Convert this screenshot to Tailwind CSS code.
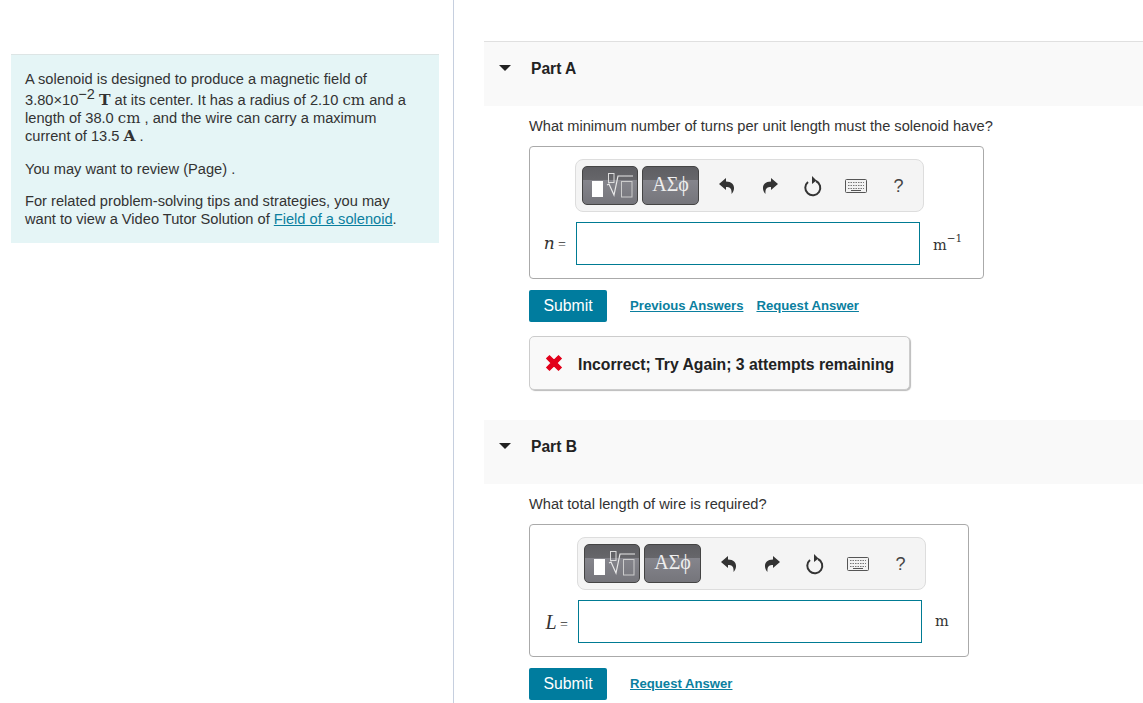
<!DOCTYPE html>
<html lang="en">
<head>
    <meta charset="UTF-8">
    <title>Solenoid problem</title>
    <script src="https://cdn.jsdelivr.net/npm/@tailwindcss/browser@4"></script>
</head>
<body class="bg-white font-['Liberation_Sans',Arial,sans-serif] text-[14.65px] text-[#333] overflow-hidden">
<div class="flex h-[703px] w-[1143px] overflow-hidden">

    <!-- Left column: problem text -->
    <aside class="w-[454px] shrink-0 border-r border-[#c6cfdf] pt-[54px] pl-[11px]">
        <div class="w-[428px] h-[189px] bg-[#e5f5f6] border-t border-[#dde5e5] pl-[14px] pt-[15px] leading-[18px]">
            <p>A solenoid is designed to produce a magnetic field of</p>
            <p class="mt-[3px]">3.80×10<span class="text-[14.5px] leading-none relative -top-[6px] whitespace-nowrap">−2</span> <span class="font-['DejaVu_Serif',serif] text-[15.5px] font-bold">T</span> at its center. It has a radius of 2.10 <span class="font-['DejaVu_Serif',serif] text-[15px]">cm</span> and a</p>
            <p>length of 38.0 <span class="font-['DejaVu_Serif',serif] text-[15px]">cm</span> , and the wire can carry a maximum</p>
            <p>current of 13.5 <span class="font-['DejaVu_Serif',serif] text-[15.5px] font-bold">A</span> .</p>
            <p class="mt-[15px]">You may want to review (Page) .</p>
            <p class="mt-[14px]">For related problem-solving tips and strategies, you may</p>
            <p>want to view a Video Tutor Solution of <a href="#" class="text-[#0b7f9f] underline">Field of a solenoid</a>.</p>
        </div>
    </aside>

    <!-- Right column: parts -->
    <main class="pl-[30px] pt-[41px] grow">

        <!-- Part A -->
        <section class="h-[65px] bg-[#f9f9f9] border-t border-[#e0e0e0] flex items-start pt-[17px]">
            <svg class="ml-[15px] mt-[6px]" width="12" height="6" viewBox="0 0 12 6"><path d="M0 0H12L6 6Z" fill="#222"/></svg>
            <h2 class="ml-[20px] font-bold text-[#222] text-[15.6px] leading-[20px]">Part A</h2>
        </section>
        <div class="pl-[45px]">
            <p class="mt-[11px] leading-[18px]">What minimum number of turns per unit length must the solenoid have?</p>
            <div class="mt-[11px] w-[455px] h-[133px] border border-[#aaa] rounded-[4px] pt-[12px]">
                <div class="ml-[45px] w-[349px] h-[53px] bg-[#f4f4f4] border border-[#ddd] rounded-[8px] flex items-center pl-[6px]">
                    <span class="w-[56px] h-[39px] rounded-[5px] border border-[#444] bg-[linear-gradient(#5e5e62_0,#66666a_35%,#85858c_36%,#75757b_100%)] shrink-0">
                        <svg width="54" height="37" viewBox="0 0 54 37" fill="none">
                            <rect x="9" y="14" width="11" height="16" fill="#fff"/>
                            <rect x="25.5" y="6.5" width="5.5" height="9" stroke="#ddd"/>
                            <path d="M24 18L26 17L31 28L35 9H50" stroke="#e8e8e8" stroke-width="1.2"/>
                            <rect x="38.5" y="14.5" width="10.5" height="15.5" stroke="#ccc"/>
                        </svg>
                    </span>
                    <span class="ml-[4px] w-[57px] h-[39px] pb-[3px] rounded-[5px] border border-[#444] bg-[linear-gradient(#5e5e62_0,#66666a_35%,#85858c_36%,#75757b_100%)] shrink-0 flex items-center justify-center font-['Liberation_Serif',serif] text-[20px] text-[#eee]">ΑΣϕ</span>
                    <span class="ml-[6px] w-[43px] flex justify-center">
                        <svg width="16" height="16" viewBox="0 0 16 16"><path d="M7 0L0 6L7 12V9C11 9 13 10.500 12.500 16C16.500 12 16.500 3.500 7 3.500Z" fill="#333"/></svg>
                    </span>
                    <span class="w-[43px] flex justify-center">
                        <svg width="16" height="16" viewBox="0 0 16 16"><path d="M9 0L16 6L9 12V9C5 9 3 10.500 3.500 16C-.5 12 -.5 3.500 9 3.500Z" fill="#333"/></svg>
                    </span>
                    <span class="w-[43px] flex justify-center">
                        <svg width="20" height="22" viewBox="0 0 20 22" fill="none"><path d="M5 7A7.500 7.500 0 1 0 13 6" stroke="#333" stroke-width="2"/><path d="M9 1L13.500 5.500L9 9Z" fill="#333"/></svg>
                    </span>
                    <span class="w-[43px] flex justify-center">
                        <svg width="22" height="14" viewBox="0 0 22 14" fill="none"><rect x=".5" y=".5" width="21" height="13" rx="1" fill="#f2f2f2" stroke="#555"/><path d="M3 3.500H19M3 6.500H19M3 9.500H19" stroke="#777" stroke-dasharray="1.500 1"/><path d="M6 11.500H16" stroke="#555"/></svg>
                    </span>
                    <span class="w-[43px] text-center text-[18px] leading-none text-[#444]">?</span>
                </div>
                <div class="flex items-center mt-[10px]">
                    <span class="w-[46px] pr-[10px] text-right font-['Liberation_Serif',serif] text-[14px]"><i class="font-['DejaVu_Serif',serif] text-[17px]">n</i> =</span>
                    <div class="w-[344px] h-[43px] border border-[#007b93] bg-white"></div>
                    <span class="ml-[13px] mt-[5px] font-['DejaVu_Serif',serif] text-[14.5px]">m<sup class="text-[10.5px] -top-[8px] relative align-baseline">−1</sup></span>
                </div>
            </div>
            <div class="flex items-center mt-[11px]">
                <button class="w-[78px] h-[32px] bg-[#007c9e] rounded-[2px] text-white text-[15.8px]">Submit</button>
                <a href="#" class="ml-[23px] text-[#0b7f9f] underline font-bold text-[13.15px]">Previous Answers</a>
                <a href="#" class="ml-[13px] text-[#0b7f9f] underline font-bold text-[13.15px]">Request Answer</a>
            </div>
            <div class="mt-[14px] w-[381px] h-[54px] bg-[#f9f9f9] border border-[#ccc] rounded-[5px] shadow-[1px_1px_1px_#bbb] flex items-center pl-[15px] pt-[4px]">
                <svg class="-mt-[4px]" width="18" height="18" viewBox="0 0 16 16"><path d="M1.500 4L4 1.500L8 5.500L12 1.500L14.500 4L10.500 8L14.500 12L12 14.500L8 10.500L4 14.500L1.500 12L5.500 8Z" fill="#e2001b" stroke="#e2001b"/></svg>
                <span class="ml-[15px] font-bold text-[15.75px] text-[#222]">Incorrect; Try Again; 3 attempts remaining</span>
            </div>
        </div>

        <!-- Part B -->
        <section class="mt-[30px] h-[64px] bg-[#f9f9f9] flex items-start pt-[17px]">
            <svg class="ml-[15px] mt-[6px]" width="12" height="6" viewBox="0 0 12 6"><path d="M0 0H12L6 6Z" fill="#222"/></svg>
            <h2 class="ml-[20px] font-bold text-[#222] text-[15.6px] leading-[20px]">Part B</h2>
        </section>
        <div class="pl-[45px]">
            <p class="mt-[11px] leading-[18px]">What total length of wire is required?</p>
            <div class="mt-[11px] w-[440px] h-[133px] border border-[#aaa] rounded-[4px] pt-[12px]">
                <div class="ml-[47px] w-[349px] h-[53px] bg-[#f4f4f4] border border-[#ddd] rounded-[8px] flex items-center pl-[6px]">
                    <span class="w-[56px] h-[39px] rounded-[5px] border border-[#444] bg-[linear-gradient(#5e5e62_0,#66666a_35%,#85858c_36%,#75757b_100%)] shrink-0">
                        <svg width="54" height="37" viewBox="0 0 54 37" fill="none">
                            <rect x="9" y="14" width="11" height="16" fill="#fff"/>
                            <rect x="25.5" y="6.5" width="5.5" height="9" stroke="#ddd"/>
                            <path d="M24 18L26 17L31 28L35 9H50" stroke="#e8e8e8" stroke-width="1.2"/>
                            <rect x="38.5" y="14.5" width="10.5" height="15.5" stroke="#ccc"/>
                        </svg>
                    </span>
                    <span class="ml-[4px] w-[57px] h-[39px] pb-[3px] rounded-[5px] border border-[#444] bg-[linear-gradient(#5e5e62_0,#66666a_35%,#85858c_36%,#75757b_100%)] shrink-0 flex items-center justify-center font-['Liberation_Serif',serif] text-[20px] text-[#eee]">ΑΣϕ</span>
                    <span class="ml-[6px] w-[43px] flex justify-center">
                        <svg width="16" height="16" viewBox="0 0 16 16"><path d="M7 0L0 6L7 12V9C11 9 13 10.500 12.500 16C16.500 12 16.500 3.500 7 3.500Z" fill="#333"/></svg>
                    </span>
                    <span class="w-[43px] flex justify-center">
                        <svg width="16" height="16" viewBox="0 0 16 16"><path d="M9 0L16 6L9 12V9C5 9 3 10.500 3.500 16C-.5 12 -.5 3.500 9 3.500Z" fill="#333"/></svg>
                    </span>
                    <span class="w-[43px] flex justify-center">
                        <svg width="20" height="22" viewBox="0 0 20 22" fill="none"><path d="M5 7A7.500 7.500 0 1 0 13 6" stroke="#333" stroke-width="2"/><path d="M9 1L13.500 5.500L9 9Z" fill="#333"/></svg>
                    </span>
                    <span class="w-[43px] flex justify-center">
                        <svg width="22" height="14" viewBox="0 0 22 14" fill="none"><rect x=".5" y=".5" width="21" height="13" rx="1" fill="#f2f2f2" stroke="#555"/><path d="M3 3.500H19M3 6.500H19M3 9.500H19" stroke="#777" stroke-dasharray="1.500 1"/><path d="M6 11.500H16" stroke="#555"/></svg>
                    </span>
                    <span class="w-[43px] text-center text-[18px] leading-none text-[#444]">?</span>
                </div>
                <div class="flex items-center mt-[10px]">
                    <span class="w-[48px] pr-[10px] text-right font-['Liberation_Serif',serif] text-[14px]"><i class="text-[20px]">L</i> =</span>
                    <div class="w-[344px] h-[43px] border border-[#007b93] bg-white"></div>
                    <span class="ml-[13px] font-['DejaVu_Serif',serif] text-[14.5px]">m</span>
                </div>
            </div>
            <div class="flex items-center mt-[11px]">
                <button class="w-[78px] h-[32px] bg-[#007c9e] rounded-[2px] text-white text-[15.8px]">Submit</button>
                <a href="#" class="ml-[23px] text-[#0b7f9f] underline font-bold text-[13.15px]">Request Answer</a>
            </div>
        </div>
    </main>
</div>
</body>
</html>
